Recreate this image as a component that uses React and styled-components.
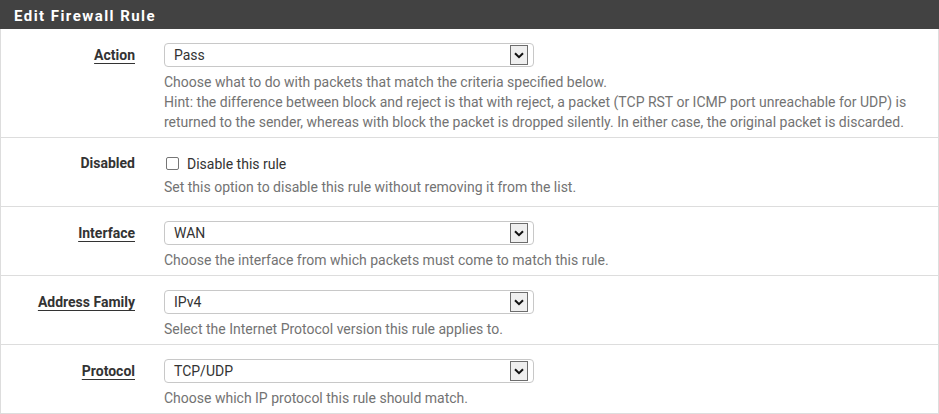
import React from "react";
import styled, { createGlobalStyle } from "styled-components";

const GlobalStyle = createGlobalStyle`
  html, body {
    margin: 0;
    padding: 0;
    background: #fff;
  }
  body {
    font-family: Roboto, "Liberation Sans", Arial, sans-serif;
  }
`;

const Panel = styled.div`
  width: 939px;
  box-sizing: border-box;
  border: 1px solid #dddddd;
  border-top: none;
  background: #fff;
`;

const Heading = styled.div`
  height: 29px;
  background: #424242;
  color: #fff;
  display: flex;
  align-items: center;
  padding-left: 14px;
  margin: 0 -1px;
`;

const HeadingTitle = styled.h2`
  margin: 0;
  padding-top: 2px;
  font-size: 15px;
  font-weight: 700;
  letter-spacing: 1.45px;
`;

const Row = styled.div`
  display: grid;
  grid-template-columns: 148px 1fr;
  border-bottom: 1px solid #dddddd;
  padding: 14px 0 ${(p) => (p.$check ? "9px" : "5px")};
`;

const Label = styled.div`
  text-align: right;
  padding-right: 14px;
  height: ${(p) => (p.$check ? "23px" : "24px")};
  line-height: ${(p) => (p.$check ? "23px" : "24px")};
  font-size: 14px;
  font-weight: 700;
  color: #333;
  span {
    text-decoration: ${(p) => (p.$underline ? "underline" : "none")};
    text-underline-offset: 3px;
  }
`;

const Control = styled.div`
  padding-left: 15px;
  padding-right: 16px;
`;

const SelectBox = styled.div`
  width: 370px;
  height: 24px;
  box-sizing: border-box;
  border: 1px solid #c8c8c8;
  border-radius: 4px;
  display: flex;
  align-items: center;
  justify-content: space-between;
  padding: 0 5px 0 9px;
  font-size: 14px;
  color: #333;
`;

const Arrow = styled.div`
  width: 18px;
  height: 20px;
  box-sizing: border-box;
  border: 1px solid #6d6d6d;
  background: #efefef;
  display: flex;
  align-items: center;
  justify-content: center;
`;

const CheckRow = styled.label`
  height: 23px;
  display: flex;
  align-items: center;
  gap: 8px;
  font-size: 14px;
  color: #333;
  padding-left: 2px;
`;

const Box = styled.span`
  width: 13px;
  height: 13px;
  box-sizing: border-box;
  border: 1px solid #767676;
  border-radius: 2px;
  background: #fff;
`;

const Help = styled.div`
  margin-top: ${(p) => (p.$check ? "2px" : "5px")};
  font-size: 14px;
  line-height: 20px;
  color: #737373;
`;

const Select = ({ value }) => (
  <SelectBox>
    <span>{value}</span>
    <Arrow>
      <svg width="10" height="7" viewBox="0 0 10 7">
        <path d="M1 1.2 L5 5.2 L9 1.2" fill="none" stroke="#111" strokeWidth="2" />
      </svg>
    </Arrow>
  </SelectBox>
);

const rows = [
  {
    label: "Action",
    underline: true,
    value: "Pass",
    help: [
      "Choose what to do with packets that match the criteria specified below.",
      "Hint: the difference between block and reject is that with reject, a packet (TCP RST or ICMP port unreachable for UDP) is",
      "returned to the sender, whereas with block the packet is dropped silently. In either case, the original packet is discarded.",
    ],
  },
  {
    label: "Disabled",
    checkbox: "Disable this rule",
    help: ["Set this option to disable this rule without removing it from the list."],
  },
  {
    label: "Interface",
    underline: true,
    value: "WAN",
    help: ["Choose the interface from which packets must come to match this rule."],
  },
  {
    label: "Address Family",
    underline: true,
    value: "IPv4",
    help: ["Select the Internet Protocol version this rule applies to."],
  },
  {
    label: "Protocol",
    underline: true,
    value: "TCP/UDP",
    help: ["Choose which IP protocol this rule should match."],
  },
];

const App = () => {
  return (
    <>
      <GlobalStyle />
      <Panel>
        <Heading>
          <HeadingTitle>Edit Firewall Rule</HeadingTitle>
        </Heading>
        {rows.map((r) => {
          const check = Boolean(r.checkbox);
          return (
            <Row key={r.label} $check={check}>
              <Label $underline={r.underline} $check={check}>
                <span>{r.label}</span>
              </Label>
              <Control>
                {check ? (
                  <CheckRow>
                    <Box />
                    {r.checkbox}
                  </CheckRow>
                ) : (
                  <Select value={r.value} />
                )}
                <Help $check={check}>
                  {r.help.map((line, i) => (
                    <div key={i}>{line}</div>
                  ))}
                </Help>
              </Control>
            </Row>
          );
        })}
      </Panel>
    </>
  );
};

export default App;
